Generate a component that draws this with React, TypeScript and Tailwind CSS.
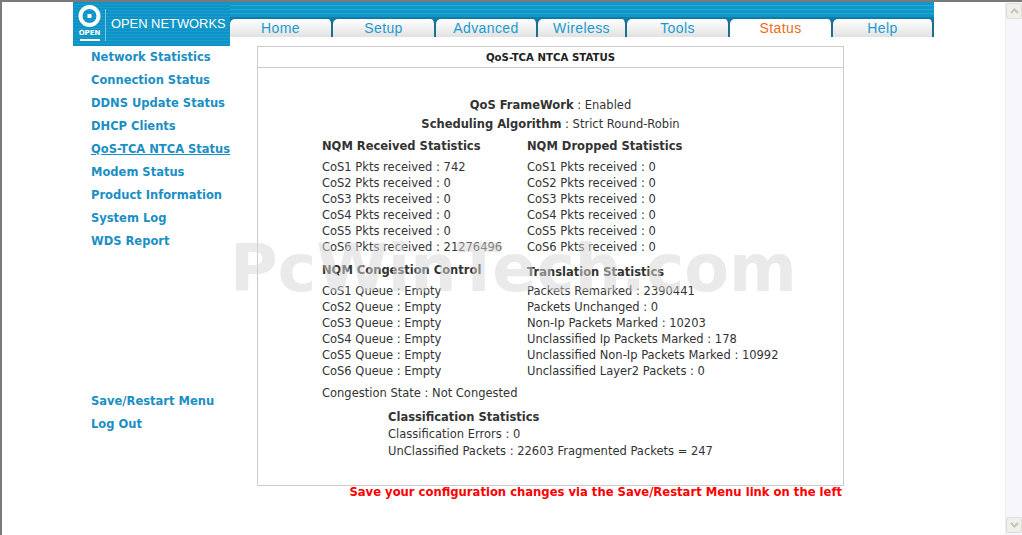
const sideTop = [
  'Network Statistics',
  'Connection Status',
  'DDNS Update Status',
  'DHCP Clients',
  'QoS-TCA NTCA Status',
  'Modem Status',
  'Product Information',
  'System Log',
  'WDS Report',
];

const tabs = [
  { label: 'Home', w: 'w-[103px]' },
  { label: 'Setup', w: 'w-[103px]' },
  { label: 'Advanced', w: 'w-[102px]' },
  { label: 'Wireless', w: 'w-[89px]' },
  { label: 'Tools', w: 'w-[103px]' },
  { label: 'Status', w: 'w-[103px]', active: true },
  { label: 'Help', w: 'w-[101px]' },
];

const received = ['CoS1 Pkts received : 742', 'CoS2 Pkts received : 0', 'CoS3 Pkts received : 0', 'CoS4 Pkts received : 0', 'CoS5 Pkts received : 0', 'CoS6 Pkts received : 21276496'];
const dropped = ['CoS1 Pkts received : 0', 'CoS2 Pkts received : 0', 'CoS3 Pkts received : 0', 'CoS4 Pkts received : 0', 'CoS5 Pkts received : 0', 'CoS6 Pkts received : 0'];
const queues = ['CoS1 Queue : Empty', 'CoS2 Queue : Empty', 'CoS3 Queue : Empty', 'CoS4 Queue : Empty', 'CoS5 Queue : Empty', 'CoS6 Queue : Empty'];
const translation = ['Packets Remarked : 2390441', 'Packets Unchanged : 0', 'Non-Ip Packets Marked : 10203', 'Unclassified Ip Packets Marked : 178', 'Unclassified Non-Ip Packets Marked : 10992', 'Unclassified Layer2 Packets : 0'];

const Rows = ({ items }: { items: string[] }) => (
  <div>
    {items.map((t) => (
      <div key={t} className="h-4 leading-4 whitespace-nowrap">{t}</div>
    ))}
  </div>
);

const Logo = () => (
  <div className="relative flex h-[44px] w-[157px] shrink-0 items-start overflow-hidden bg-[repeating-linear-gradient(180deg,#0e93c6_0px,#0e93c6_2px,#1a9ccd_2px,#1a9ccd_3px)] pl-[5px] pt-[2px]">
    <div className="flex w-[24px] flex-col items-center">
      <svg width="24" height="24" viewBox="0 0 24 24">
        <circle cx="11.5" cy="12" r="9" fill="none" stroke="#fff" strokeWidth="4" />
        <rect x="9.5" y="10" width="4" height="4" fill="#fff" />
      </svg>
      <span className="-ml-[1px] mt-[1px] text-[7px] font-bold leading-[9px] text-white font-['DejaVu_Sans',sans-serif]">OPEN</span>
      <div className="-ml-[1px] mt-[1px] h-[2px] w-[20px] bg-white" />
    </div>
    <div className="ml-[3px] mt-[5px] h-[32px] w-px bg-[#7cc4e0]" />
    <span className="ml-[5px] mt-[13px] text-[12.9px] leading-[14px] text-white font-['Liberation_Sans',sans-serif] whitespace-nowrap">OPEN NETWORKS</span>
  </div>
);

export default function App() {
  return (
    <div className="relative flex h-[535px] w-[1022px] overflow-hidden bg-white border-t-2 border-l-2 border-[#7a7a7a] font-['DejaVu_Sans',sans-serif] text-[11.5px] text-[#333]">
      <div className="w-[1003px] shrink-0 pl-[71px]">
        {/* Header */}
        <div className="flex h-[44px] w-[861px]">
          <Logo />
          <div className="h-[35px] w-[704px]">
            <div className="h-[17px] border-b-2 border-[#0d7ca6] bg-[repeating-linear-gradient(180deg,#0f97c9_0px,#0f97c9_3px,#2aa6d4_3px,#2aa6d4_4px)]" />
            <div className="flex h-[18px] bg-[#0d7ca6]">
              {tabs.map((t) => (
                <div
                  key={t.label}
                  className={`${t.w} flex items-center justify-center rounded-t-[5px] border-r-2 border-[#1f6f8c] text-[14px] leading-[18px] font-['Liberation_Sans',sans-serif] tracking-[0.4px] ${
                    t.active
                      ? 'bg-white text-[#f26a1b]'
                      : 'bg-gradient-to-b from-white to-[#e2e2e2] text-[#1b9bcf]'
                  }`}
                >
                  {t.label}
                </div>
              ))}
            </div>
          </div>
        </div>

        <div className="flex">
          {/* Sidebar */}
          <div className="flex h-[445px] w-[184px] shrink-0 flex-col pl-[18px] pt-[3px] font-bold text-[#1b8fc4]">
            {sideTop.map((s) => (
              <div key={s} className={`h-[23px] leading-[16px] whitespace-nowrap ${s === 'QoS-TCA NTCA Status' ? 'underline' : ''}`}>{s}</div>
            ))}
            <div className="mt-[137px] h-[23px] leading-[16px]">Save/Restart Menu</div>
            <div className="h-[23px] leading-[16px]">Log Out</div>
          </div>

          {/* Main */}
          <div className="w-[587px] shrink-0">
            <div className="h-[440px] border border-[#cccccc]">
              <div className="h-[21px] border-b border-[#cccccc] text-center font-bold leading-[21px] text-[10.2px] text-[#222]">QoS-TCA NTCA STATUS</div>
              <div className="pt-[29px]">
                <div className="h-[19px] text-center leading-4"><b>QoS FrameWork</b> : Enabled</div>
                <div className="h-[22px] text-center leading-4"><b>Scheduling Algorithm</b> : Strict Round-Robin</div>
                <div className="flex pl-[64px]">
                  <div className="w-[205px]">
                    <div className="h-[21px] font-bold leading-[16px]">NQM Received Statistics</div>
                    <Rows items={received} />
                    <div className="mt-[7px] h-[21px] font-bold leading-[16px]">NQM Congestion Control</div>
                    <Rows items={queues} />
                    <div className="mt-[6px] h-[16px] leading-4 whitespace-nowrap">Congestion State : Not Congested</div>
                  </div>
                  <div>
                    <div className="h-[21px] font-bold leading-[16px]">NQM Dropped Statistics</div>
                    <Rows items={dropped} />
                    <div className="mt-[9px] h-[19px] font-bold leading-[16px]">Translation Statistics</div>
                    <Rows items={translation} />
                  </div>
                </div>
                <div className="mt-[8px] pl-[130px]">
                  <div className="h-[17px] font-bold leading-4">Classification Statistics</div>
                  <div className="h-[17px] leading-4">Classification Errors : 0</div>
                  <div className="h-[17px] leading-4">UnClassified Packets : 22603 Fragmented Packets = 247</div>
                </div>
              </div>
            </div>
            <div className="-mt-[2px] pr-[2px] text-right text-[11.6px] font-bold leading-[16px] text-[#f00] whitespace-nowrap">Save your configuration changes via the Save/Restart Menu link on the left</div>
          </div>
        </div>
      </div>

      {/* Scrollbar */}
      <div className="flex w-[17px] flex-col justify-between border-l border-[#eeeeee] bg-[#f7f7fb] pb-[2px] pt-[1px]">
        <div className="flex h-[16px] w-[16px] items-center justify-center rounded-[2px] border border-[#ddd] bg-[#f0f0e8]">
          <svg width="9" height="6" viewBox="0 0 9 6"><path d="M1 5 L4.5 1.5 L8 5" fill="none" stroke="#c4c4c0" strokeWidth="2" /></svg>
        </div>
        <div className="flex h-[16px] w-[16px] items-center justify-center rounded-[2px] border border-[#ddd] bg-[#f0f0e8]">
          <svg width="9" height="6" viewBox="0 0 9 6"><path d="M1 1 L4.5 4.5 L8 1" fill="none" stroke="#c4c4c0" strokeWidth="2" /></svg>
        </div>
      </div>

      {/* Watermark over the page */}
      <div className="pointer-events-none absolute left-[228px] top-[229px] whitespace-nowrap text-[65px] font-bold leading-[76px] text-[#d6d6d6] opacity-50 font-['DejaVu_Sans',sans-serif]">PcWinTech.com</div>
    </div>
  );
}
